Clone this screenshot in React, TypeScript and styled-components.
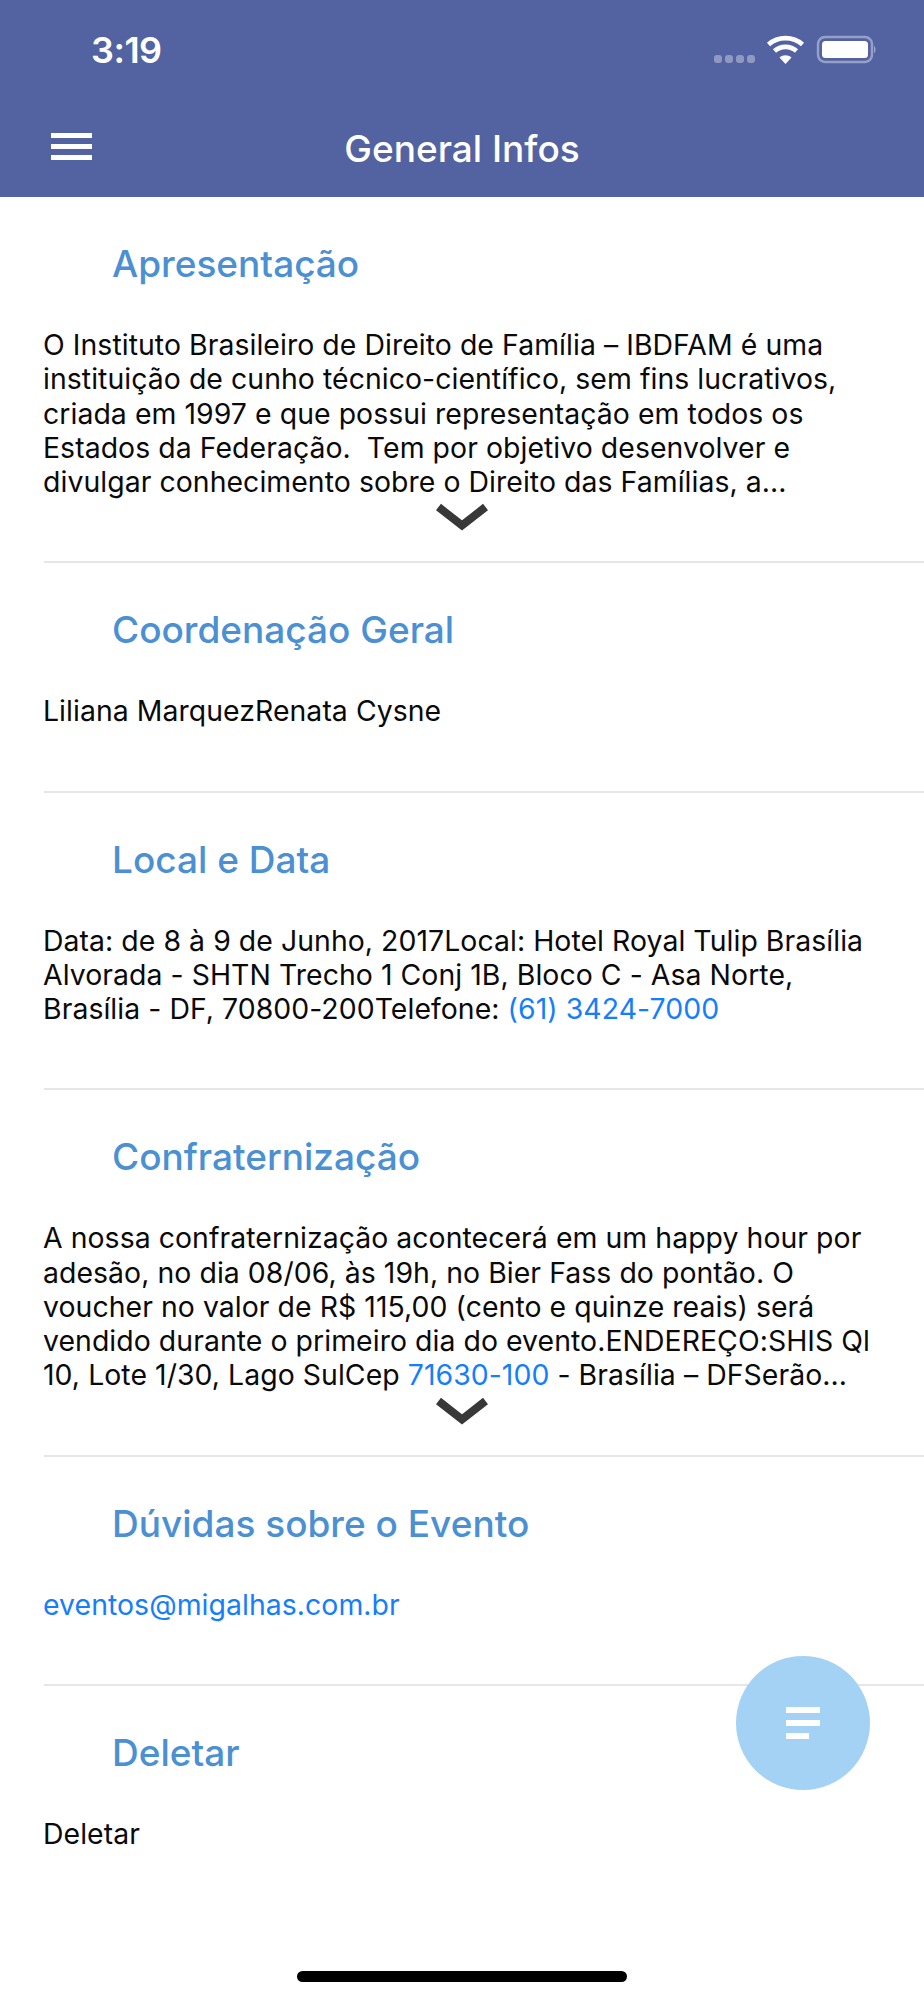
import React from "react";
import styled, { createGlobalStyle } from "styled-components";

const Global = createGlobalStyle`
  html, body { margin: 0; padding: 0; background: #fff; }
  body { font-family: Inter, "Liberation Sans", sans-serif; }
`;

const Page = styled.div`
  position: relative;
  width: 924px;
  height: 2000px;
  overflow: hidden;
  background: #fff;
`;

const Header = styled.header`
  height: 197px;
  background: #5363a1;
  display: flex;
  flex-direction: column;
`;

const StatusBar = styled.div`
  height: 100px;
  padding: 0 48px 0 91px;
  display: flex;
  align-items: center;
  justify-content: space-between;
`;

const Clock = styled.span`
  font-size: 36px;
  font-weight: 600;
  color: #fff;
  letter-spacing: -0.5px;
`;

const NavBar = styled.div`
  flex: 1;
  position: relative;
  display: flex;
  align-items: center;
  justify-content: center;
`;

const Title = styled.h1`
  margin: 0;
  font-size: 37px;
  font-weight: 500;
  color: #fff;
`;

const Burger = styled.svg`
  position: absolute;
  left: 51px;
  top: 33px;
`;

const Section = styled.section`
  position: relative;
  padding: 45px 0 62px 0;
`;

const Divider = styled.hr`
  margin: 0 0 0 44px;
  border: 0;
  height: 2px;
  background: #e6e6e6;
`;

const Heading = styled.h2`
  margin: 0 0 42px 112px;
  font-size: 37px;
  line-height: 44px;
  font-weight: 500;
  color: #4a90d2;
`;

const Body = styled.p`
  margin: 0 0 0 43px;
  font-size: 28.4px;
  line-height: 34.25px;
  color: #0a0a0a;
  white-space: nowrap;
  letter-spacing: 0.06px;
`;

const TextLink = styled.span`
  color: #147efb;
`;

const Chevron = styled.svg`
  position: absolute;
  left: 435px;
  bottom: 30px;
`;

const Fab = styled.div`
  position: absolute;
  left: 736px;
  top: 1656px;
  width: 134px;
  height: 134px;
  border-radius: 50%;
  background: #a4d2f5;
  display: flex;
  align-items: center;
  justify-content: center;
`;

const HomeBar = styled.div`
  position: absolute;
  left: 297px;
  top: 1971px;
  width: 330px;
  height: 11px;
  border-radius: 5.5px;
  background: #000;
`;

const StatusIcons = styled.svg`
  display: block;
`;

const More = () => (
  <Chevron width="54" height="28" viewBox="0 0 54 28">
    <path d="M3.5 4 L27 22.5 L50.5 4" fill="none" stroke="#383838" strokeWidth="8" />
  </Chevron>
);

export default function App() {
  return (
    <Page>
      <Global />
      <Header>
        <StatusBar>
          <Clock>3:19</Clock>
          <StatusIcons width="163" height="30" viewBox="0 0 163 30">
            <g fill="#fff" fillOpacity="0.35">
              <rect x="1" y="20" width="8" height="8" rx="3" />
              <rect x="12" y="20" width="8" height="8" rx="3" />
              <rect x="23" y="20" width="8" height="8" rx="3" />
              <rect x="34" y="20" width="8" height="8" rx="3" />
            </g>
            <g fill="none" stroke="#fff" strokeWidth="4.6">
              <path d="M55.5 9.5 C65 1 80 1 89.5 9.5" />
              <path d="M61.5 16 C67.5 10.5 77.5 10.5 83.5 16" />
            </g>
            <path d="M66.5 22.5 C70 19.5 75 19.5 78.5 22.5 L72.5 29 Z" fill="#fff" />
            <rect x="105" y="2" width="54" height="25" rx="7" fill="none" stroke="#fff" strokeOpacity="0.4" strokeWidth="2.4" />
            <rect x="109" y="6" width="46" height="17" rx="3.5" fill="#fff" />
            <path d="M161 11 C163 12 163 17 161 18 Z" fill="#fff" fillOpacity="0.45" />
          </StatusIcons>
        </StatusBar>
        <NavBar>
          <Burger width="41" height="27" viewBox="0 0 41 27">
            <g fill="#fff">
              <rect x="0" y="0" width="41" height="5" />
              <rect x="0" y="11" width="41" height="5" />
              <rect x="0" y="22" width="41" height="5" />
            </g>
          </Burger>
          <Title>General Infos</Title>
        </NavBar>
      </Header>

      <Section>
        <Heading>Apresentação</Heading>
        <Body>
          O Instituto Brasileiro de Direito de Família – IBDFAM é uma<br />
          instituição de cunho técnico-científico, sem fins lucrativos,<br />
          criada em 1997 e que possui representação em todos os<br />
          Estados da Federação.&nbsp; Tem por objetivo desenvolver e<br />
          divulgar conhecimento sobre o Direito das Famílias, a...
        </Body>
        <More />
      </Section>
      <Divider />

      <Section>
        <Heading>Coordenação Geral</Heading>
        <Body>Liliana MarquezRenata Cysne</Body>
      </Section>
      <Divider />

      <Section>
        <Heading>Local e Data</Heading>
        <Body>
          Data: de 8 à 9 de Junho, 2017Local: Hotel Royal Tulip Brasília<br />
          Alvorada - SHTN Trecho 1 Conj 1B, Bloco C - Asa Norte,<br />
          Brasília - DF, 70800-200Telefone: <TextLink>(61) 3424-7000</TextLink>
        </Body>
      </Section>
      <Divider />

      <Section>
        <Heading>Confraternização</Heading>
        <Body>
          A nossa confraternização acontecerá em um happy hour por<br />
          adesão, no dia 08/06, às 19h, no Bier Fass do pontão. O<br />
          voucher no valor de R$ 115,00 (cento e quinze reais) será<br />
          vendido durante o primeiro dia do evento.ENDEREÇO:SHIS Ql<br />
          10, Lote 1/30, Lago SulCep <TextLink>71630-100</TextLink> - Brasília – DFSerão...
        </Body>
        <More />
      </Section>
      <Divider />

      <Section>
        <Heading>Dúvidas sobre o Evento</Heading>
        <Body>
          <TextLink>eventos@migalhas.com.br</TextLink>
        </Body>
      </Section>
      <Divider />

      <Section>
        <Heading>Deletar</Heading>
        <Body>Deletar</Body>
      </Section>

      <Fab>
        <svg width="34" height="32" viewBox="0 0 34 32">
          <g fill="#fff">
            <rect x="0" y="0" width="34" height="6" />
            <rect x="0" y="13" width="34" height="6" />
            <rect x="0" y="26" width="23" height="6" />
          </g>
        </svg>
      </Fab>
      <HomeBar />
    </Page>
  );
}
